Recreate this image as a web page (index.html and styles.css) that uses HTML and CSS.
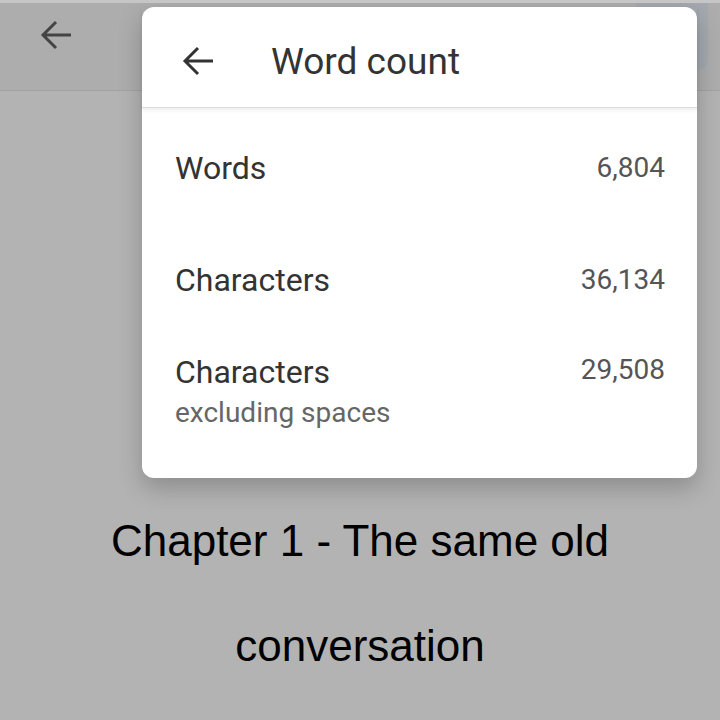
FILE: index.html
```html
<!DOCTYPE html>
<html lang="en">
<head>
    <meta charset="UTF-8">
    <title>Word count</title>
    <link rel="stylesheet" href="styles.css">
</head>
<body>
    <div class="page">
        <!-- Верхняя панель документа -->
        <div class="topbar">
            <svg class="icon" viewBox="0 0 32 32" width="32" height="32">
                <path d="M31 16H3M16 3L3 16l13 13" fill="none" stroke="#444" stroke-width="3"/>
            </svg>
            <div class="corner-btn"></div>
        </div>

        <!-- Текст документа -->
        <div class="doc">
            <p class="chapter">Chapter 1 - The same old conversation</p>
        </div>

        <!-- Диалог подсчёта слов -->
        <div class="dialog">
            <div class="dialog-head">
                <svg class="icon" viewBox="0 0 32 32" width="32" height="32">
                    <path d="M31 16H3M16 3L3 16l13 13" fill="none" stroke="#333" stroke-width="3"/>
                </svg>
                <h1>Word count</h1>
            </div>
            <div class="rows">
                <div class="row">
                    <span class="label">Words</span>
                    <span class="value">6,804</span>
                </div>
                <div class="row">
                    <span class="label">Characters</span>
                    <span class="value">36,134</span>
                </div>
                <div class="row row-top">
                    <div>
                        <div class="label">Characters</div>
                        <div class="sub">excluding spaces</div>
                    </div>
                    <span class="value">29,508</span>
                </div>
            </div>
        </div>
    </div>
</body>
</html>
```

FILE: styles.css
```css
/* Базовые стили */
body {
    margin: 0;
    background-color: #b3b3b3;
    font-family: Roboto, "Noto Sans", sans-serif;
}

.page {
    position: relative;
    width: 720px;
    height: 720px;
    overflow: hidden;
    border-top: 3px solid #c6c6c6;
    box-sizing: border-box;
}

.topbar {
    height: 88px;
    background-color: #adadad;
    border-bottom: 1px solid #a2a2a2;
    display: flex;
    align-items: flex-start;
    justify-content: space-between;
    padding: 16px 12px 0 40px;
    box-sizing: border-box;
}

.corner-btn {
    width: 72px;
    height: 67px;
    margin-top: -16px;
    background-color: #a4a9b0;
    border-radius: 0 0 10px 10px;
}

.doc {
    padding-top: 397px;
    display: flex;
    justify-content: center;
}

.chapter {
    margin: 0;
    width: 530px;
    text-align: center;
    font-family: "Liberation Sans", Arial, sans-serif;
    font-size: 44px;
    line-height: 105px;
    color: #000;
}

/* Диалог */
.dialog {
    position: absolute;
    left: 142px;
    top: 4px;
    width: 555px;
    height: 471px;
    background-color: #fff;
    border-radius: 12px;
    box-shadow: 0 10px 24px rgba(0, 0, 0, 0.22);
}

.dialog-head {
    height: 101px;
    display: flex;
    align-items: center;
    padding: 8px 0 0 40px;
    box-sizing: border-box;
    border-bottom: 1px solid #dcdcdc;
    box-shadow: 0 2px 4px rgba(0, 0, 0, 0.08);
}

.dialog-head h1 {
    margin: 0 0 0 57px;
    font-size: 37px;
    font-weight: 400;
    color: #333;
}

.rows {
    padding: 4px 32px 0 33px;
}

.row {
    height: 112px;
    display: flex;
    align-items: center;
    justify-content: space-between;
}

.row-top {
    align-items: flex-start;
    padding-top: 16px;
}

.label {
    font-size: 32px;
    color: #333;
    line-height: 40px;
}

.value {
    font-size: 28px;
    color: #555;
    line-height: 40px;
}

.row-top .value {
    margin-top: -2px;
}

.sub {
    font-size: 28px;
    color: #666;
    line-height: 42px;
}
```
